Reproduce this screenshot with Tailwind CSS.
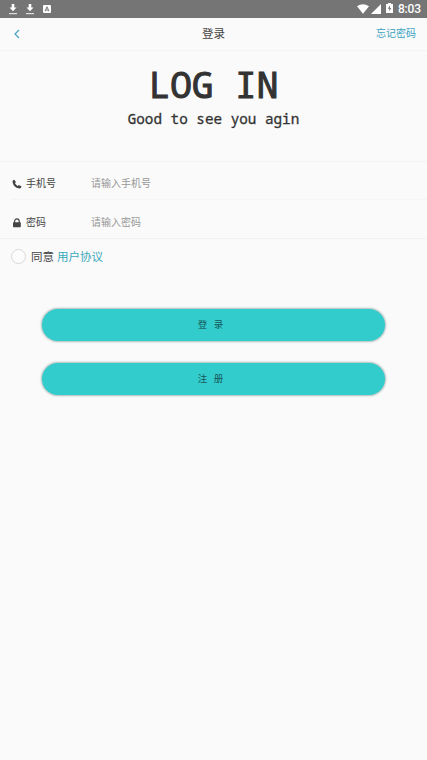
<!DOCTYPE html>
<html lang="zh-CN">
<head>
<meta charset="utf-8">
<title>登录</title>
<script src="https://cdn.jsdelivr.net/npm/@tailwindcss/browser@4"></script>
</head>
<body class="h-[760px] overflow-hidden bg-[#fafafa] text-[#444] font-['Roboto','Noto_Sans_CJK_SC',sans-serif]">
<header class="flex h-[18px] items-center bg-[#757575] px-2 text-white">
  <svg class="h-3 w-[10px]" viewBox="0 0 10 12"><path d="M3.7 1h2.6v3.5h2.2L5 8.2 1.5 4.5h2.2z" fill="currentColor"/><path d="M1 10h8v1.2H1z" fill="#ddd"/></svg>
  <svg class="ml-[7px] h-3 w-[10px]" viewBox="0 0 10 12"><path d="M3.7 1h2.6v3.5h2.2L5 8.2 1.5 4.5h2.2z" fill="currentColor"/><path d="M1 10h8v1.2H1z" fill="#ddd"/></svg>
  <svg class="ml-2 size-2" viewBox="0 0 8 8"><rect width="8" height="8" rx="1" fill="currentColor"/><path d="M2 6.3 4 1.8l2 4.5M2.8 5h2.4" fill="none" stroke="#757575"/></svg>
  <svg class="ml-auto h-[10px] w-3" viewBox="0 0 12 10"><path d="M0 2.3Q6-2 12 2.3L6 9.8z" fill="currentColor"/></svg>
  <svg class="ml-[2px] size-[10px]" viewBox="0 0 10 10"><path d="M10 0v10H0z" fill="currentColor"/></svg>
  <svg class="mb-[2px] ml-[5px] h-[10px] w-[7px]" viewBox="0 0 7 11" preserveAspectRatio="none"><path d="M2 0h3v1.2h2V11H0V1.2h2z" fill="currentColor"/><path d="M4 2.8 1.8 6.4h1.5v2.8l2-3.7H4z" fill="#757575"/></svg>
  <span class="ml-[5px] mr-[-3px] w-[24px] text-[12px] leading-[18px] whitespace-nowrap font-medium tracking-[-0.2px]">8:03</span>
</header>
<nav class="grid h-[33px] grid-cols-3 items-center border-b border-[#f3f3f3] px-3">
  <svg class="h-[10px] w-[10px]" viewBox="0 0 10 10"><path d="M7 1 3 5l4 4" fill="none" stroke="#4ba6c4" stroke-width="1.3"/></svg>
  <h1 class="pt-[2px] text-center text-[11.5px]">登录</h1>
  <a class="-mr-px pb-px text-right text-[10px] leading-[14px] text-[#3ba3c2]">忘记密码</a>
</nav>
<section class="flex h-[111px] flex-col items-center border-b border-[#f3f3f3] text-[#333] font-['Droid_Sans_Mono','Noto_Sans_Mono','DejaVu_Sans_Mono',monospace]">
  <h2 class="mt-[12px] text-[36px] leading-[44px] whitespace-pre [-webkit-text-stroke:1.1px_#333]">LOG IN</h2>
  <p class="mt-[3px] text-[14.3px] leading-[18px] whitespace-pre [-webkit-text-stroke:0.3px_#333]">Good to see you agin</p>
</section>
<form>
  <label class="ml-3 flex h-[38px] items-center border-b border-[#f5f5f5] pt-[6px] text-[10px]">
    <svg class="size-[10px]" viewBox="0 0 10 10"><path d="M2.3.7 3.9 3.1 3 4.3Q4 6.1 5.7 7.1L6.9 6l2.6 1.6Q9.2 9.6 7.3 9.5 1 8.8.5 2.6.6.9 2.3.7z" fill="#444"/></svg>
    <span class="ml-1 w-[65px]">手机号</span><span class="text-[#979797]">请输入手机号</span>
  </label>
  <label class="flex h-[39px] items-center border-b border-[#f1f1f1] pl-3 pt-[7px] text-[10px]">
    <svg class="size-[10px]" viewBox="0 0 10 10"><path d="M2.6 5V3.2a2.3 2.3 0 0 1 4.6 0V5" fill="none" stroke="#444" stroke-width="1.2"/><rect x="1" y="4.2" width="7.8" height="5" rx=".6" fill="#444"/></svg>
    <span class="ml-1 w-[65px]">密码</span><span class="text-[#979797]">请输入密码</span>
  </label>
  <div class="flex h-[35px] items-center pl-[11px] text-[11.5px]">
    <span class="size-[15px] rounded-full border border-[#d9d9d9] bg-[#fcfcfc]"></span>
    <span class="ml-[5px] pt-[3px]">同意</span><a class="ml-[3px] pt-[3px] text-[#3ba9bc]">用户协议</a>
  </div>
  <div class="mt-[35px] flex flex-col gap-[22px] px-[42px]">
    <button type="button" class="h-8 rounded-full bg-[#33cccc] pr-[6px] text-[9.5px] text-[#17585a] shadow-[0_0_2px_1px_#a9bcbc]"><span class="inline-flex gap-[6.5px]"><span>登</span><span>录</span></span></button>
    <button type="button" class="h-8 rounded-full bg-[#33cccc] pr-[6px] text-[9.5px] text-[#17585a] shadow-[0_0_2px_1px_#a9bcbc]"><span class="inline-flex gap-[6.5px]"><span>注</span><span>册</span></span></button>
  </div>
</form>
</body>
</html>
